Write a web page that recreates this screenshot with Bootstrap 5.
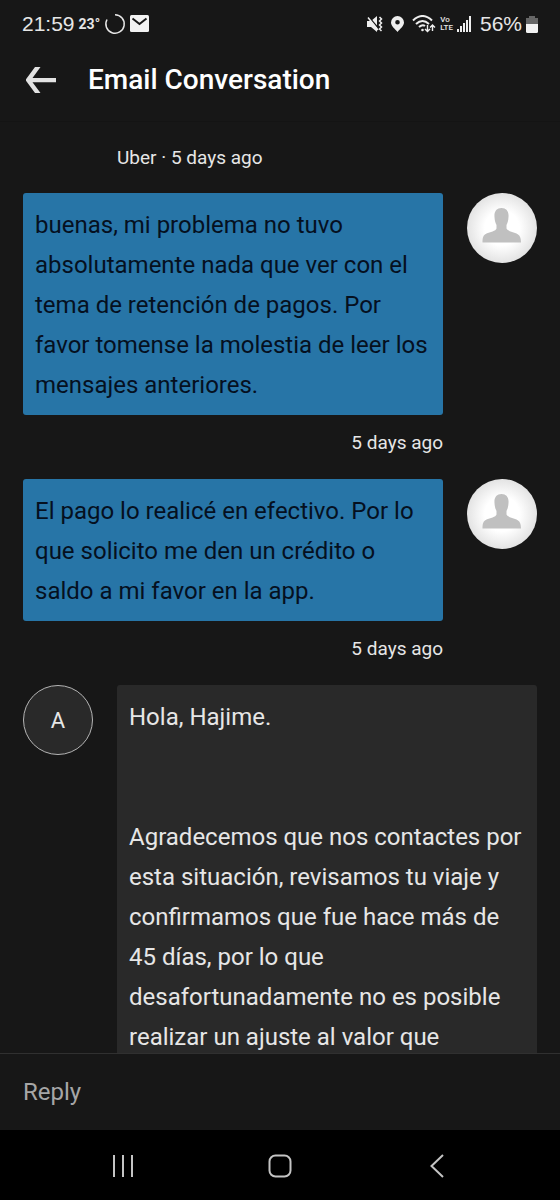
<!DOCTYPE html>
<html lang="en">
<head>
<meta charset="utf-8">
<meta name="viewport" content="width=device-width, initial-scale=1">
<title>Email Conversation</title>
<link href="https://cdn.jsdelivr.net/npm/bootstrap@5.3.0/dist/css/bootstrap.min.css" rel="stylesheet">
<style>
body { background: #171717; color: #e6e6e6; font-family: Roboto, "Liberation Sans", sans-serif; }
svg { display: block; flex: none; }
.statusbar { height: 48px; padding: 0 22px; font-family: "Liberation Sans", Arial, sans-serif; font-size: 21px; line-height: 28px; }
.statusbar .temp { font-family: Roboto, sans-serif; font-size: 14px; font-weight: 700; }
.volte { font-family: Roboto, sans-serif; font-size: 8px; line-height: 8px; font-weight: 500; }
.titlebar { height: 74px; padding: 0 23px 10px; gap: 29px; border-bottom: 1px solid #141414; }
.titlebar h1 { font-size: 28px; line-height: 32px; font-weight: 500; color: #fff; }
.thread { padding: 24px 23px 0; min-height: 0; }
.entry { gap: 24px; }
.stamp { font-size: 19px; line-height: 24px; }
.first-stamp { margin-bottom: 23px; }
.avatar { width: 70px; height: 70px; }
.avatar-col { width: 70px; }
.avatar-photo { background: radial-gradient(circle, #fff 35%, #e2e2e2 72%); }
.avatar-letter { background: #292929; border: 1px solid #b5b5b5; font-size: 22px; }
.bubble { padding: 12px 12px 10px; border-radius: 3px; font-size: 24px; line-height: 40px; }
.bubble p + p { margin-top: 80px; }
.bubble-mine { background: #2775a7; color: #05101f; }
.bubble-agent { background: #292929; }
.replybar { height: 77px; padding: 0 23px; border-top: 1px solid #303030; }
.replybar input, .replybar input:focus { background: transparent; color: #e6e6e6; height: 48px; font-size: 24px; line-height: 40px; box-shadow: none; }
.replybar input::placeholder { color: #a6a6a6; opacity: 1; }
.sysnav { height: 70px; background: #000; padding: 2px 45px 0; }
.sysnav .btn, .titlebar .btn { border: 0; border-radius: 0; }
</style>
</head>
<body>
<div class="d-flex flex-column vh-100 overflow-hidden">
  <div class="statusbar d-flex align-items-center flex-shrink-0">
    <span>21:59</span>
    <span class="temp ms-1">23°</span>
    <svg class="ms-1" width="22" height="22" viewBox="0 0 22 22" fill="none" stroke="#e6e6e6" stroke-width="1.500"><path d="M11 1.800A9.200 9.200 0 1 1 3 6.500"/></svg>
    <svg class="ms-1" width="20" height="18" viewBox="0 0 20 18"><rect width="19" height="17" rx="1.500" fill="#f2f2f2"/><path d="M2.500 3.500L9.500 9L16.500 3.500" fill="none" stroke="#171717" stroke-width="2"/></svg>
    <div class="d-flex align-items-center ms-auto gap-2">
      <svg width="16" height="16" viewBox="0 0 16 16" fill="#eee"><path d="M0 5h4l6-5v16l-6-5H0z"/><path d="M1 0L12 13" stroke="#171717" stroke-width="1.500"/><path d="M1 1.500L11 14" stroke="#eee" stroke-width="1.500"/><path d="M12.500 1l2 2-2 2 2 2-2 2 2 2-2 2 2 2" fill="none" stroke="#eee" stroke-width="1.500"/></svg>
      <svg width="13" height="16" viewBox="0 0 13 16" fill="#eee" fill-rule="evenodd"><path d="M6.500 0A6.500 6.500 0 0 0 0 6.500C0 10 4 13 6.500 16C9 13 13 10 13 6.500A6.500 6.500 0 0 0 6.500 0zm0 4a2.300 2.300 0 1 1 0 4.600a2.300 2.300 0 0 1 0-4.600z"/></svg>
      <div class="d-flex align-items-center gap-1">
        <svg width="24" height="18" viewBox="0 0 24 18" fill="none" stroke="#eee" stroke-width="2"><path d="M1 5.500Q10.500-3.500 20 5.500M4 9Q10.500 3 17 9M7 12Q10.500 9 13 11"/><circle cx="10.500" cy="15" r="1.300" fill="#eee" stroke="none"/><path d="M15.500 10v6m-2.500-2l2.500 2.500 2.500-2.500M20.500 16v-5.500m-2.500 2l2.500-2.500 2.500 2.500" stroke-width="1.400"/></svg>
        <span class="volte">Vo<br>LTE</span>
        <svg width="15" height="16" viewBox="0 0 15 16" fill="#eee"><path d="M0 13h2v3H0zM3 10h2v6H3zM6 7h2v9H6zM9 4h2v12H9zM12 0h2v16h-2z"/></svg>
      </div>
      <div class="d-flex align-items-center gap-1"><span>56%</span>
      <svg width="12" height="17" viewBox="0 0 12 17"><path d="M3 0h6v2h3v6H0V2h3z" fill="#666"/><path d="M0 8h12v7.500q0 1.500-1.500 1.500h-9Q0 17 0 15.500z" fill="#f2f2f2"/></svg></div>
    </div>
  </div>
  <header class="titlebar d-flex align-items-center flex-shrink-0">
    <button class="btn p-0" type="button" aria-label="Back">
      <svg width="36" height="28" viewBox="0 0 36 28"><path d="M3 12h30v4.200H9.500L17.500 27h-5.500L3 14.800V13.200L12 1h5.500L9.500 12z" fill="#e2e2e2"/></svg>
    </button>
    <h1 class="m-0">Email Conversation</h1>
  </header>

  <main class="thread flex-fill overflow-hidden">
    <div class="entry first-stamp d-flex"><div class="avatar-col flex-shrink-0"></div><div class="stamp">Uber · 5 days ago</div></div>

    <article class="entry d-flex mb-4">
      <div class="flex-fill">
        <div class="bubble bubble-mine">buenas, mi problema no tuvo absolutamente nada que ver con el tema de retención de pagos. Por favor tomense la molestia de leer los mensajes anteriores.</div>
        <div class="stamp text-end mt-3">5 days ago</div>
      </div>
      <div class="avatar avatar-photo rounded-circle flex-shrink-0">
        <svg width="70" height="70" viewBox="0 0 70 70"><path d="M34.500 15C29.500 15 27 18.500 27.500 24C27.700 28 28.500 30 29.500 32V35.500C29 38 23 39 19.500 40.500C16 42 15.500 45 15.500 49.500H54C54 45 53 42 49.500 40.500C46 39 40.500 38 39.500 35.500V32C40.500 30 41.300 28 41.500 24C42 18.500 39.500 15 34.500 15Z" fill="#c0c0c0"/></svg>
      </div>
    </article>

    <article class="entry d-flex mb-4">
      <div class="flex-fill">
        <div class="bubble bubble-mine">El pago lo realicé en efectivo. Por lo que solicito me den un crédito o saldo a mi favor en la app.</div>
        <div class="stamp text-end mt-3">5 days ago</div>
      </div>
      <div class="avatar avatar-photo rounded-circle flex-shrink-0">
        <svg width="70" height="70" viewBox="0 0 70 70"><path d="M34.500 15C29.500 15 27 18.500 27.500 24C27.700 28 28.500 30 29.500 32V35.500C29 38 23 39 19.500 40.500C16 42 15.500 45 15.500 49.500H54C54 45 53 42 49.500 40.500C46 39 40.500 38 39.500 35.500V32C40.500 30 41.300 28 41.500 24C42 18.500 39.500 15 34.500 15Z" fill="#c0c0c0"/></svg>
      </div>
    </article>

    <article class="entry d-flex">
      <div class="avatar avatar-letter rounded-circle flex-shrink-0 d-flex align-items-center justify-content-center">A</div>
      <div class="bubble bubble-agent flex-fill">
        <p class="mb-0">Hola, Hajime.</p>
        <p class="mb-0">Agradecemos que nos contactes por esta situación, revisamos tu viaje y confirmamos que fue hace más de 45 días, por lo que desafortunadamente no es posible realizar un ajuste al valor que</p>
      </div>
    </article>
  </main>

  <form class="replybar d-flex align-items-center flex-shrink-0">
    <input class="form-control border-0 p-0" id="reply" type="text" placeholder="Reply" aria-label="Reply">
  </form>
  <nav class="sysnav d-flex align-items-center flex-shrink-0" aria-label="System">
    <button class="btn p-0 flex-fill d-flex justify-content-center" type="button" aria-label="Recent apps"><svg width="24" height="24" viewBox="0 0 24 24" stroke="#c4c4c4" stroke-width="2"><path d="M3 1v22M12 1v22M21 1v22"/></svg></button>
    <button class="btn p-0 flex-fill d-flex justify-content-center" type="button" aria-label="Home"><svg width="24" height="24" viewBox="0 0 24 24" fill="none" stroke="#c4c4c4" stroke-width="2"><rect x="1.500" y="1.500" width="21" height="21" rx="6"/></svg></button>
    <button class="btn p-0 flex-fill d-flex justify-content-center" type="button" aria-label="Go back"><svg width="24" height="24" viewBox="0 0 24 24" fill="none" stroke="#c4c4c4" stroke-width="2"><path d="M18 1L6.500 12L18 23"/></svg></button>
  </nav>
</div>
<script src="https://cdn.jsdelivr.net/npm/bootstrap@5.3.0/dist/js/bootstrap.bundle.min.js"></script>
</body>
</html>
